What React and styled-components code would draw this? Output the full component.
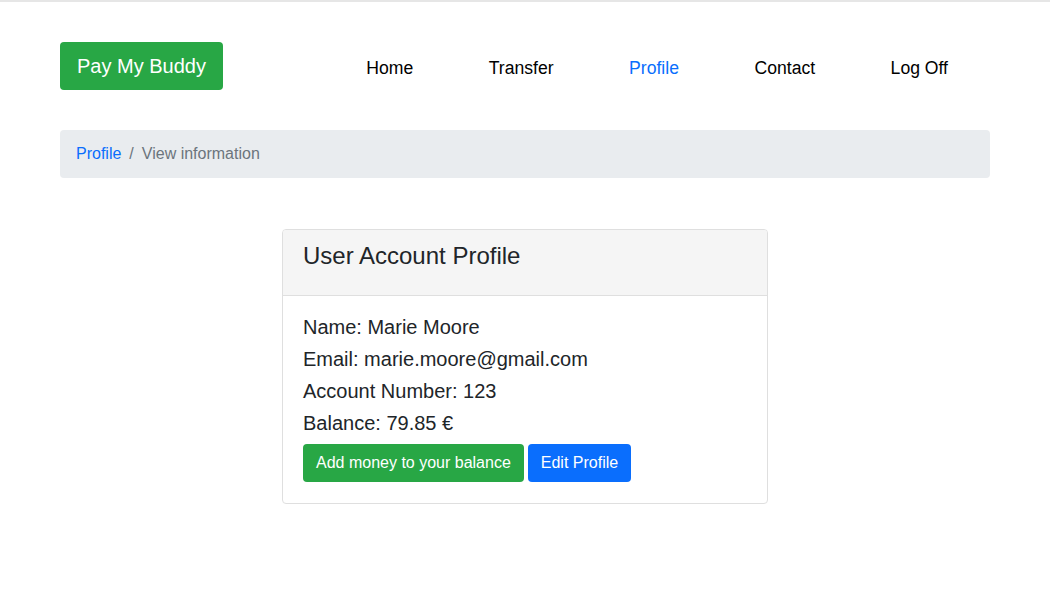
import React from 'react';
import styled, { createGlobalStyle } from 'styled-components';

const GlobalStyle = createGlobalStyle`
  html, body {
    margin: 0;
    padding: 0;
    background: #fff;
  }
  body {
    font-family: "Liberation Sans", Arial, Helvetica, sans-serif;
    color: #212529;
    -webkit-font-smoothing: antialiased;
  }
  * { box-sizing: border-box; }
`;

const Page = styled.div`
  border-top: 2px solid #e6e6e6;
  min-height: 596px;
`;

const Wrapper = styled.div`
  width: 930px;
  margin: 0 auto;
`;

const Header = styled.header`
  display: flex;
  align-items: center;
  height: 128px;
  padding-top: 39px;
  padding-bottom: 39px;
`;

const Brand = styled.a`
  display: inline-block;
  background: #28a745;
  color: #fff;
  font-size: 20px;
  line-height: 30px;
  padding: 9px 17px;
  border-radius: 4px;
  text-decoration: none;
`;

const Nav = styled.nav`
  display: flex;
  gap: 75.5px;
  margin-left: auto;
  margin-right: 42px;
  padding-top: 4px;
`;

const NavLink = styled.a`
  font-size: 17.6px;
  line-height: 26px;
  color: ${p => (p.$active ? '#0a6efd' : '#000')};
  text-decoration: none;
`;

const Breadcrumb = styled.ol`
  display: flex;
  align-items: center;
  list-style: none;
  margin: 0;
  height: 48px;
  padding: 0 16px;
  background: #e9ecef;
  border-radius: 4px;
  font-size: 16px;
`;

const Crumb = styled.li`
  color: ${p => (p.$link ? '#0a6efd' : '#6c757d')};
`;

const Divider = styled.span`
  color: #6c757d;
  padding: 0 8px;
`;

const Main = styled.main`
  display: flex;
  justify-content: center;
  padding-top: 51px;
`;

const Card = styled.section`
  width: 486px;
  border: 1px solid #dfdfdf;
  border-radius: 4px;
  overflow: hidden;
`;

const CardHeader = styled.div`
  background: #f5f5f5;
  border-bottom: 1px solid #dfdfdf;
  padding: 12px 20px 25px;
`;

const CardTitle = styled.h4`
  margin: 0;
  font-size: 24px;
  font-weight: 400;
  line-height: 28px;
`;

const CardBody = styled.div`
  padding: 15px 20px 21px;
`;

const InfoLine = styled.div`
  font-size: 20px;
  line-height: 32px;
`;

const Actions = styled.div`
  display: flex;
  gap: 4px;
  margin-top: 5px;
`;

const Button = styled.button`
  font-family: inherit;
  font-size: 16px;
  line-height: 24px;
  padding: 7px 13px;
  border: 0;
  border-radius: 4px;
  color: #fff;
  background: ${p => (p.$variant === 'success' ? '#28a745' : '#0a6efd')};
  cursor: pointer;
`;

const navItems = ['Home', 'Transfer', 'Profile', 'Contact', 'Log Off'];

export default function App() {
  return (
    <Page>
      <GlobalStyle />
      <Wrapper>
        <Header>
          <Brand href="#">Pay My Buddy</Brand>
          <Nav>
            {navItems.map(item => (
              <NavLink key={item} href="#" $active={item === 'Profile'}>
                {item}
              </NavLink>
            ))}
          </Nav>
        </Header>

        <Breadcrumb>
          <Crumb $link>Profile</Crumb>
          <Divider>/</Divider>
          <Crumb>View information</Crumb>
        </Breadcrumb>

        <Main>
          <Card>
            <CardHeader>
              <CardTitle>User Account Profile</CardTitle>
            </CardHeader>
            <CardBody>
              <InfoLine>Name: Marie Moore</InfoLine>
              <InfoLine>Email: marie.moore@gmail.com</InfoLine>
              <InfoLine>Account Number: 123</InfoLine>
              <InfoLine>Balance: 79.85 €</InfoLine>
              <Actions>
                <Button $variant="success">Add money to your balance</Button>
                <Button>Edit Profile</Button>
              </Actions>
            </CardBody>
          </Card>
        </Main>
      </Wrapper>
    </Page>
  );
}
